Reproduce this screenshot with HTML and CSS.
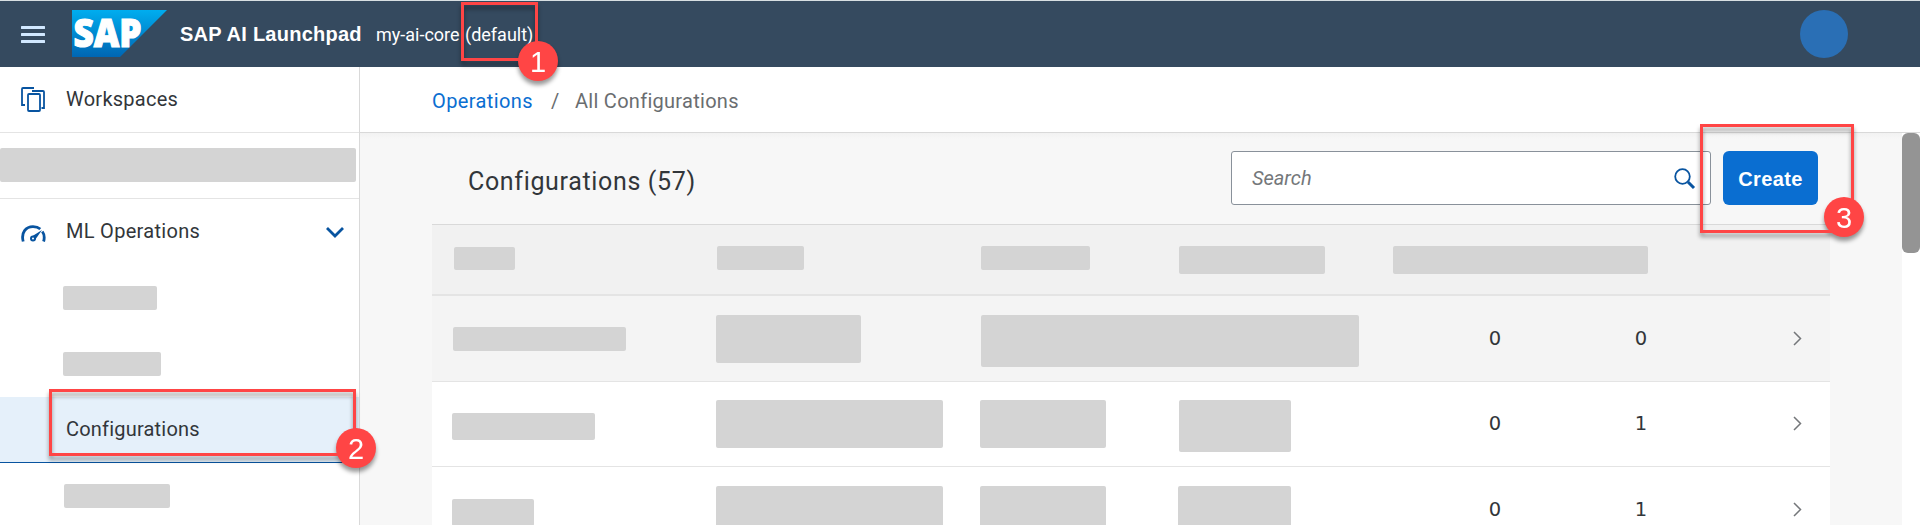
FILE: index.html
```html
<!DOCTYPE html>
<html lang="en">
<head>
<meta charset="utf-8">
<title>SAP AI Launchpad</title>
<link rel="stylesheet" href="styles.css">
</head>
<body>
<header class="shell">
  <svg class="menu" width="24" height="17" viewBox="0 0 24 17"><path d="M1 1.500H23M1 8.500H23M1 15.500H23"/></svg>
  <svg class="logo" width="95" height="47" viewBox="0 0 95 47">
    <defs><linearGradient id="sap" x1="0" y1="0" x2="0" y2="1"><stop offset="0" stop-color="#00adef"/><stop offset="1" stop-color="#0066b3"/></linearGradient></defs>
    <path d="M0 0H95L48 47H0Z" fill="url(#sap)"/>
    <text x="1.500" y="36.500" textLength="68" lengthAdjust="spacingAndGlyphs">SAP</text>
  </svg>
  <span class="product">SAP AI Launchpad</span>
  <span class="tenant">my-ai-core</span>
  <span class="group">(default)</span>
  <span class="avatar"></span>
</header>
<div class="body">
  <nav class="side">
    <div class="item ruled">
      <svg class="icon" width="24" height="25" viewBox="0 0 24 25"><path d="M13 1H2Q1 1 1 2V18H4M11 4H22Q23 4 23 5V21H20.500M8 7H18Q19 7 19 8V23Q19 24 18 24H8Q7 24 7 23V8Q7 7 8 7Z"/></svg>
      <span class="t-work">Workspaces</span>
    </div>
    <div class="item ruled"><span class="sk wide"></span></div>
    <div class="item">
      <svg class="icon gauge" width="25" height="18" viewBox="0 0 25 18"><path class="arc" d="M2.200 16.500C-.2 7.500 5 1.600 12 1.600Q16.500 1.600 19.300 4M21.300 6.500Q24.300 10.500 22.600 16.500"/><path class="needle" d="M21 5L10 12L14 15Z"/><circle class="hub" cx="12" cy="13.500" r="2"/></svg>
      <span class="t-ml">ML Operations</span>
      <svg class="down" width="20" height="13" viewBox="0 0 20 13"><path d="M2 2L10 10L18 2"/></svg>
    </div>
    <div class="item sub"><span class="sk s1"></span></div>
    <div class="item sub"><span class="sk s2"></span></div>
    <div class="item active"><span class="t-conf">Configurations</span></div>
    <div class="item sub"><span class="sk s3"></span></div>
  </nav>
  <main class="main">
    <div class="crumbs"><a class="link">Operations</a><span class="slash">/</span><span class="here">All Configurations</span></div>
    <div class="scroll">
      <section class="page">
        <div class="toolbar">
          <h1 class="title">Configurations (57)</h1>
          <div class="search"><span class="hint">Search</span>
            <svg class="lens" width="22" height="22" viewBox="0 0 22 22"><circle cx="8.500" cy="8.500" r="7.300"/><path d="M14 14L20 20"/></svg>
          </div>
          <button class="create">Create</button>
        </div>
        <div class="table">
          <div class="row head"><span class="sk h1"></span><span class="sk h2"></span><span class="sk h3"></span><span class="sk h4"></span><span class="sk h5"></span></div>
          <div class="row hover"><span class="sk a1"></span><span class="sk a2"></span><span class="sk a3"></span><span class="num n1">0</span><span class="num n2">0</span><svg class="go" width="9" height="15" viewBox="0 0 9 15"><path d="M1 1L7.500 7.500L1 14"/></svg></div>
          <div class="row"><span class="sk b1"></span><span class="sk b2"></span><span class="sk b3"></span><span class="sk b4"></span><span class="num n1">0</span><span class="num n2">1</span><svg class="go" width="9" height="15" viewBox="0 0 9 15"><path d="M1 1L7.500 7.500L1 14"/></svg></div>
          <div class="row last"><span class="sk c1"></span><span class="sk b2"></span><span class="sk b3"></span><span class="sk c4"></span><span class="num n1">0</span><span class="num n2">1</span><svg class="go" width="9" height="15" viewBox="0 0 9 15"><path d="M1 1L7.500 7.500L1 14"/></svg></div>
        </div>
      </section>
      <div class="track"><div class="thumb"></div></div>
    </div>
  </main>
</div>
<div class="mark m1"><span class="badge">1</span></div>
<div class="mark m2"><span class="badge">2</span></div>
<div class="mark m3"><span class="badge">3</span></div>
</body>
</html>
```
FILE: styles.css
```css
* { box-sizing: border-box; }
body { margin: 0; width: 1920px; height: 525px; overflow: hidden; position: relative; background: #fff; color: #32363a; font-family: Roboto, "Liberation Sans", sans-serif; font-size: 20px; }
svg { display: block; flex: none; fill: none; }
span, a { white-space: nowrap; }

.shell { height: 67px; border-top: 1px solid #d8dfe2; background: #354a5f; color: #fff; display: flex; align-items: center; padding: 0 72px 0 21px; }
.menu { stroke: #d1e8ff; stroke-width: 3; stroke-linecap: round; margin-right: 27px; }
.logo { margin-right: 13px; margin-top: -1px; overflow: visible; }
.logo text { font: 800 38px "Open Sans", sans-serif; fill: #fff; stroke: #fff; stroke-width: 1.200px; }
.product { font: 700 20px "Liberation Sans", sans-serif; width: 196px; letter-spacing: .25px; }
.tenant { font-size: 18px; width: 89px; }
.group { font-size: 18px; }
.avatar { width: 48px; height: 48px; border-radius: 50%; background: #2a6fb5; margin-left: auto; }

.body { display: flex; height: 458px; }
.side { width: 360px; border-right: 1px solid #d9d9d9; flex: none; }
.item { height: 66px; display: flex; align-items: center; }
.item > span:not(.sk) { line-height: 24px; padding-bottom: 2px; }
.ruled { border-bottom: 1px solid #e4e4e4; }
.icon { margin: 0 21px 0 21px; stroke: #0854a0; stroke-width: 1.800; }
.gauge { margin: 4px 20px 0 21px; }
.gauge .arc { stroke-width: 2.800; }
.gauge .needle { fill: #0854a0; stroke: none; }
.gauge .hub { fill: #fff; stroke-width: 2; }
.down { margin-left: auto; margin-right: 14px; stroke: #0854a0; stroke-width: 2.800; }
.t-work { letter-spacing: .25px; }
.t-ml { letter-spacing: .3px; }
.t-conf { letter-spacing: .2px; }
.sub { padding-left: 63px; }
.active { background: #e5f0fa; border-bottom: 1px solid #0854a0; padding-left: 66px; }
.sk { display: block; background: #d4d4d4; border-radius: 2px; height: 24px; }
.wide { width: 356px; height: 34px; margin-top: -1px; }
.s1 { width: 94px; }
.s2 { width: 98px; }
.s3 { width: 106px; margin-left: 1px; }

.main { flex: 1; display: flex; flex-direction: column; }
.crumbs { height: 66px; border-bottom: 1px solid #d9d9d9; display: flex; align-items: center; padding: 2px 0 0 72px; flex: none; color: #6a6d70; }
.link { color: #0a6ed1; width: 119px; letter-spacing: .4px; }
.slash { width: 24px; }
.here { letter-spacing: .28px; }
.scroll { flex: 1; display: flex; min-height: 0; }
.page { width: 1542px; background: linear-gradient(#f2f2f2, #f7f7f7 6px); padding: 0 72px; overflow: hidden; }
.track { width: 18px; }
.thumb { height: 120px; border-radius: 6px; background: #949494; }
.toolbar { height: 91px; display: flex; align-items: center; padding: 0 12px 1px 36px; }
.title { font-size: 25px; font-weight: 400; margin: 7px auto 0 0; letter-spacing: .66px; }
.search { width: 480px; height: 54px; border: 1px solid #89919a; border-radius: 3px; background: #fff; display: flex; align-items: center; justify-content: space-between; padding: 0 14px 0 20px; margin-right: 12px; }
.hint { font-style: italic; color: #74777a; }
.lens { stroke: #0854a0; stroke-width: 1.800; margin-top: 1px; }
.lens path { stroke-width: 3; }
.create { width: 95px; height: 54px; border: 0; border-radius: 6px; background: #0a6ed1; color: #fff; font: 700 20px "Liberation Sans", sans-serif; padding: 2px 0 0; letter-spacing: .4px; }

.table { border-top: 1px solid #d9d9d9; }
.row { height: 85px; background: #fff; border-bottom: 1px solid #e4e4e4; display: grid; grid-template-columns: 264px 264px 198px 215px 145px 1fr; padding-left: 20px; align-items: start; }
.row > * { grid-row: 1; }
.head { height: 71px; background: #f1f1f1; border-bottom: 2px solid #e4e4e4; }
.hover { height: 86px; background: #f4f4f4; }
.h1 { width: 61px; height: 23px; margin: 22px 0 0 2px; }
.h2 { width: 87px; margin: 21px 0 0 1px; }
.h3 { width: 109px; margin: 21px 0 0 1px; }
.h4 { width: 146px; height: 28px; margin: 21px 0 0 1px; }
.h5 { width: 255px; height: 28px; margin-top: 21px; grid-column: 5 / 7; }
.a1 { width: 173px; margin: 31px 0 0 1px; }
.a2 { width: 145px; height: 48px; margin-top: 19px; }
.a3 { width: 378px; height: 52px; margin: 19px 0 0 1px; grid-column: 3 / 5; }
.b1 { width: 143px; height: 27px; margin-top: 31px; }
.b2 { width: 227px; height: 48px; margin-top: 18px; }
.b3 { width: 126px; height: 48px; margin-top: 18px; }
.b4 { width: 112px; height: 52px; margin: 18px 0 0 1px; }
.c1 { width: 82px; height: 27px; margin-top: 32px; }
.c4 { width: 113px; height: 52px; margin-top: 18px; }
.last { padding-top: 1px; }
.last .c1 { margin-top: 31px; }
.num { font: 19.500px/24px "DejaVu Sans", sans-serif; text-align: center; width: 20px; margin-top: 30px; }
.n1 { grid-column: 5; margin-left: 92px; }
.n2 { grid-column: 6; margin-left: 93px; }
.go { grid-column: 6; margin: 34px 0 0 255px; stroke: #74777a; stroke-width: 1.500; }
.hover .num { margin-top: 31px; }
.hover .go { margin-top: 35px; }

/* numbered callouts laid over the page */
.mark { position: absolute; border: 3px solid #ff4545; filter: drop-shadow(0 4px 2px rgba(0,0,0,.4)); }
.m1 { left: 461px; top: 2px; width: 77px; height: 59px; }
.m2 { left: 49px; top: 389px; width: 307px; height: 67px; }
.m3 { left: 1700px; top: 124px; width: 154px; height: 109px; }
.badge { position: absolute; width: 40px; height: 40px; border-radius: 50%; background: #ff4545; color: #fff; font: 29px/42px "Liberation Sans", sans-serif; text-align: center; right: -23px; bottom: -23px; }
.m2 .badge { bottom: -15px; }
.m3 .badge { right: -13px; bottom: -7px; }
```
